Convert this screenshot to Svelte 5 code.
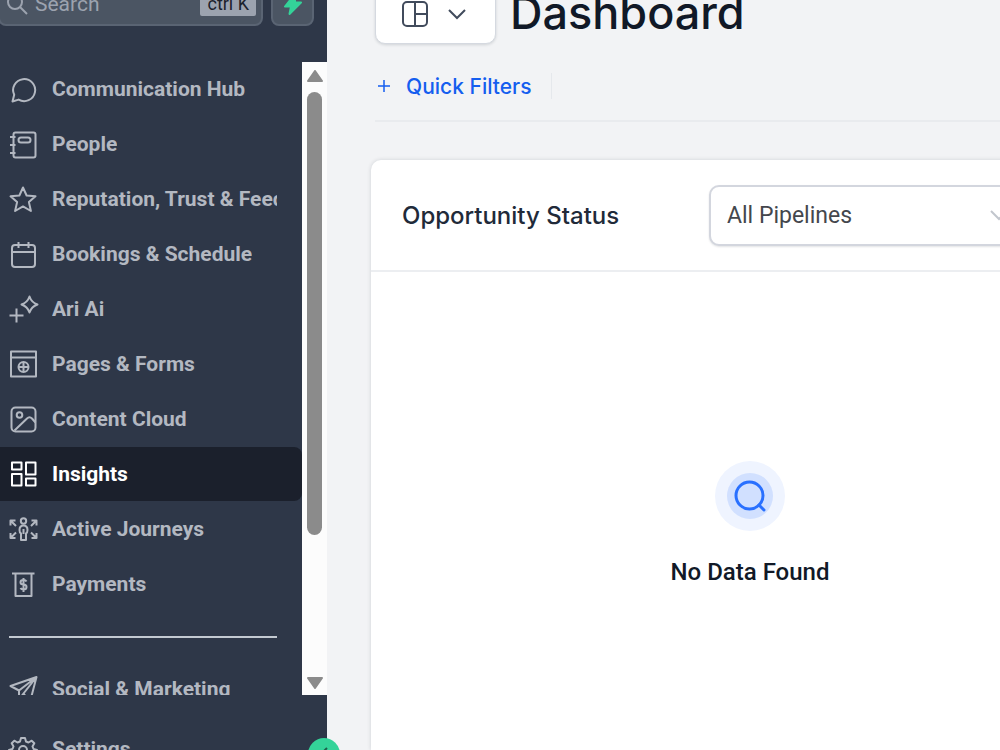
<script lang="ts">
	type Item = { name: string; icon: string };

	const items: Item[] = [
		{ name: "Communication Hub", icon: "chat" },
		{ name: "People", icon: "people" },
		{ name: "Reputation, Trust & Feedback", icon: "star" },
		{ name: "Bookings & Schedule", icon: "calendar" },
		{ name: "Ari Ai", icon: "sparkle" },
		{ name: "Pages & Forms", icon: "pages" },
		{ name: "Content Cloud", icon: "image" },
		{ name: "Insights", icon: "grid" },
		{ name: "Active Journeys", icon: "journey" },
		{ name: "Payments", icon: "payments" },
	];
	const moreItems: Item[] = [{ name: "Social & Marketing", icon: "send" }];
	const settings: Item = { name: "Settings", icon: "gear" };

	let active = $state("Insights");
	let query = $state("");
	let pipeline = $state("all");

	const thumbRatio = 0.77;

	const select = (e: MouseEvent, item: Item) => {
		e.preventDefault();
		active = item.name;
	};
</script>

{#snippet icon(name: string)}
	<svg class="icon" viewBox="0 0 28 28" aria-hidden="true">
		{#if name === "chat"}
			<path d="M3.5 26.5l1.7-6.7A11 11 0 1 1 9.6 24.6z" />
		{:else if name === "people"}
			<rect x="4.5" y="2.5" width="22" height="25" rx="2" />
			<rect x="9.5" y="7.5" width="12" height="5" rx="2.5" />
			<path d="M1 7h5.5M1 15h5.5M1 23h5.5" />
		{:else if name === "star"}
			<path d="M14 2.5l3.6 8 8.9.8-6.6 5.8 2 8.9-7.9-4.6L6.1 26l2-8.9-6.6-5.8 8.9-.8z" />
		{:else if name === "calendar"}
			<rect x="3" y="5" width="23" height="22" rx="3" />
			<path d="M3 12h23M9.5 2v6M19.5 2v6" />
		{:else if name === "sparkle"}
			<path d="M20.5 1.5c1.5 4.5 3.5 6.5 8 8-4.5 1.5-6.5 3.5-8 8-1.5-4.5-3.5-6.5-8-8 4.5-1.5 6.5-3.5 8-8z" />
			<path d="M7.5 13.5v14M.5 20.5h14" />
		{:else if name === "pages"}
			<rect x="2" y="1.5" width="25" height="25" />
			<path d="M2 7.5h25" />
			<circle cx="14.5" cy="17" r="5" />
			<path d="M9.5 17h10M14.5 12v10" />
		{:else if name === "image"}
			<rect x="2.5" y="2.5" width="24" height="24" rx="4" />
			<circle cx="10.5" cy="10" r="2.8" />
			<path d="M5.5 25.5L18 13.5q2.5-2.5 5 0l3.5 4" />
		{:else if name === "grid"}
			<rect x="3" y="2.5" width="9.5" height="7" />
			<rect x="17" y="2.5" width="9.5" height="12" />
			<rect x="3" y="14" width="9.5" height="11.5" />
			<rect x="17" y="18.5" width="9.5" height="7" />
		{:else if name === "journey"}
			<circle cx="14.5" cy="6" r="2.7" />
			<path d="M14.5 10.5c-3 0-4 2-4 4.5 0 2 .5 3 1.5 3.5V25h5v-6.5c1-.5 1.5-1.5 1.5-3.5 0-2.5-1-4.5-4-4.5zM14.5 14v5" />
			<path d="M1.5 10.500v-5h5M2 6l5 5M22.5 5.5h5v5M27 6l-5 5M1.5 18v5h5M2 22.5l5-5M22.5 23h5v-5M27 22.5l-5-5" />
		{:else if name === "payments"}
			<path d="M3 3.5h22.5M6.5 3.5V26h16V3.5" />
			<path d="M17.5 11.5c-.5-1-1.5-1.5-3-1.5-4 0-4 4.500 0 4.500s4 5 0 5c-1.5 0-2.5-.5-3-1.5M14.5 8v14" />
		{:else if name === "send"}
			<path d="M1.5 11L27.500 2 21 27l-6.5-8.5-4.5 6v-9zM10 15.5L27.500 2l-13 16.5" />
		{:else if name === "gear"}
			<circle cx="14" cy="15" r="4" />
			<path
				d="M12 3h4l1 3.5 2.5 1 3.2-1.8 2.6 2.6-1.8 3.2 1 2.5 3.5 1v4l-3.5 1-1 2.5 1.8 3.2-2.6 2.6-3.2-1.8-2.5 1-1 3.5h-4l-1-3.5-2.5-1-3.2 1.8-2.6-2.6 1.8-3.2-1-2.5L0 19v-4l3.5-1 1-2.5-1.8-3.2 2.6-2.6 3.2 1.8 2.5-1z"
			/>
		{/if}
	</svg>
{/snippet}

{#snippet link(item: Item)}
	<a
		href="#{item.icon}"
		class="item"
		data-active={active === item.name}
		onclick={(e) => select(e, item)}
	>
		{@render icon(item.icon)}
		<span>{item.name}</span>
	</a>
{/snippet}

<div class="shell">
	<aside>
		<div class="tools">
			<label class="search">
				<svg viewBox="0 0 24 24" aria-hidden="true">
					<circle cx="10" cy="10" r="7" />
					<path d="M15 15l7 7" />
				</svg>
				<input type="text" placeholder="Search" aria-label="Search" bind:value={query} />
				<kbd>ctrl K</kbd>
			</label>
			<button type="button" class="bolt" aria-label="Quick actions">
				<svg viewBox="0 0 20 24" aria-hidden="true">
					<path d="M12 2L2 14.5h6L6.5 22 18 10.5h-6z" />
				</svg>
			</button>
		</div>

		<div class="menu">
			<nav aria-label="Main">
				{#each items as item}
					{@render link(item)}
				{/each}
				<hr />
				{#each moreItems as item}
					{@render link(item)}
				{/each}
			</nav>
			<div class="scrollbar" aria-hidden="true">
				<svg viewBox="0 0 16 12"><path d="M8 1L15 11H1z" /></svg>
				<div class="track">
					<div class="thumb" style:height="{thumbRatio * 100}%"></div>
				</div>
				<svg viewBox="0 0 16 12"><path d="M1 1h14L8 11z" /></svg>
			</div>
		</div>

		<div class="footer">
			{@render link(settings)}
		</div>

		<button type="button" class="collapse" aria-label="Collapse sidebar">
			<svg viewBox="0 0 12 16" aria-hidden="true"><path d="M9 2L3 8l6 6" /></svg>
		</button>
	</aside>

	<main>
		<header>
			<button type="button" class="switcher" aria-label="Switch dashboard">
				<svg class="layout" viewBox="0 0 28 28" aria-hidden="true">
					<rect x="2" y="2" width="24" height="24" rx="4" />
					<path d="M14 2v24M14 14h12" />
				</svg>
				<svg class="chevron" viewBox="0 0 20 12" aria-hidden="true">
					<path d="M2 2l8 8 8-8" />
				</svg>
			</button>
			<h1>Dashboard</h1>
		</header>

		<div class="filters">
			<button type="button">
				<svg viewBox="0 0 12 12" aria-hidden="true"><path d="M6 0v12M0 6h12" /></svg>
				Quick Filters
			</button>
		</div>

		<section class="card">
			<div class="card-head">
				<h2>Opportunity Status</h2>
				<div class="select">
					<select aria-label="Pipeline" bind:value={pipeline}>
						<option value="all">All Pipelines</option>
					</select>
					<svg viewBox="0 0 20 12" aria-hidden="true"><path d="M2 2l8 8 8-8" /></svg>
				</div>
			</div>
			<div class="empty">
				<div class="halo">
					<svg viewBox="0 0 46 46" aria-hidden="true">
						<circle cx="22.5" cy="22.5" r="13.5" />
						<path d="M32 32l5 5" />
					</svg>
				</div>
				<p>No Data Found</p>
			</div>
		</section>
	</main>
</div>

<style>
	:global(body) {
		margin: 0;
	}

	.shell {
		display: flex;
		height: 100vh;
		overflow: hidden;
		background: #f2f3f5;
		font-family: Roboto, "Liberation Sans", sans-serif;
	}

	button,
	input,
	select {
		font: inherit;
	}

	svg {
		flex-shrink: 0;
		fill: none;
		stroke: currentColor;
		stroke-width: 2;
	}

	aside {
		position: relative;
		display: flex;
		flex-direction: column;
		flex: 0 0 327px;
		min-width: 0;
		background: #2e3748;
		color: #b3b8c1;
	}

	.tools {
		display: flex;
		align-items: flex-end;
		gap: 8px;
		flex-shrink: 0;
		height: 26px;
		padding-right: 13px;
		margin-bottom: 36px;
		overflow: hidden;
	}

	.search,
	.bolt {
		box-sizing: border-box;
		height: 44px;
		border: 2px solid #5a6473;
		border-radius: 8px;
		background: #4b5563;
	}

	.search {
		display: flex;
		align-items: center;
		flex: 1;
		min-width: 0;
		gap: 6px;
		padding: 0 5px;
		margin-left: -2px;
		color: #9ca3af;

		svg {
			width: 24px;
			height: 24px;
		}
	}

	input {
		flex: 1;
		min-width: 0;
		padding: 0;
		border: 0;
		outline: 0;
		background: none;
		color: inherit;
		font-size: 21px;

		&::placeholder {
			color: inherit;
			opacity: 1;
		}
	}

	kbd {
		padding: 0 7px;
		border-radius: 2px;
		background: #9ca3af;
		color: #1c212c;
		font: 18px/24px Roboto, "Liberation Sans", sans-serif;
	}

	.bolt {
		display: grid;
		place-items: center;
		width: 43px;
		padding: 0;

		svg {
			width: 20px;
			height: 24px;
			fill: #34d399;
			stroke: #34d399;
			stroke-linejoin: round;
		}
	}

	.menu {
		display: flex;
		flex: 1;
		min-height: 0;
	}

	nav {
		display: flex;
		flex-direction: column;
		flex: 1;
		min-width: 0;
		overflow: hidden;
	}

	.item {
		display: flex;
		align-items: center;
		flex-shrink: 0;
		gap: 15px;
		height: 54px;
		padding: 0 25px 0 9px;
		margin-bottom: 1px;
		border-radius: 0 8px 8px 0;
		color: inherit;
		font-size: 21px;
		font-weight: 700;
		line-height: 28px;
		text-decoration: none;
		white-space: nowrap;

		span {
			overflow: hidden;
		}

		&[data-active="true"] {
			background: #1b202c;
			color: #fff;
		}
	}

	.icon {
		width: 28px;
		height: 28px;
		overflow: visible;
		stroke-linejoin: round;
	}

	hr {
		flex-shrink: 0;
		width: auto;
		height: 2px;
		margin: 24px 25px 24px 9px;
		border: 0;
		background: #c3c9d1;
	}

	.scrollbar {
		display: flex;
		flex-direction: column;
		align-items: center;
		gap: 10px;
		box-sizing: border-box;
		width: 25px;
		padding: 8px 0 6px;
		background: #fcfcfc;

		svg {
			width: 16px;
			height: 12px;
			fill: #8b8b8b;
			stroke: #8b8b8b;
			stroke-linejoin: round;
		}
	}

	.track {
		flex: 1;
	}

	.thumb {
		width: 15px;
		border-radius: 8px;
		background: #8b8b8b;
	}

	.footer {
		flex-shrink: 0;
		height: 28px;
		padding-top: 27px;
	}

	.collapse {
		position: absolute;
		right: -13px;
		bottom: -20px;
		display: grid;
		place-items: center;
		width: 32px;
		height: 32px;
		padding: 0;
		border: 0;
		border-radius: 50%;
		background: #34d399;
		color: #1f5f4c;

		svg {
			width: 12px;
			height: 16px;
		}
	}

	main {
		display: flex;
		flex-direction: column;
		flex: 1;
		min-width: 0;
		padding-left: 44px;
		color: #111927;
		font-family: Inter, "Liberation Sans", sans-serif;
	}

	header {
		display: flex;
		align-items: flex-start;
		gap: 14px;
		height: 60px;
		padding-left: 4px;
		margin-top: -16px;
	}

	.switcher {
		display: flex;
		align-items: center;
		gap: 18px;
		box-sizing: border-box;
		width: 121px;
		height: 60px;
		padding: 0 25px;
		border: 1px solid #d5d9e0;
		border-radius: 10px;
		background: #fff;
		box-shadow: 0 1px 3px #10182826;
		color: #414b5c;
	}

	.layout {
		width: 28px;
		height: 28px;
	}

	.chevron {
		width: 20px;
		height: 12px;
	}

	h1,
	h2,
	p {
		margin: 0;
		font-weight: 500;
	}

	h1 {
		font-size: 45px;
		line-height: 58px;
	}

	.filters {
		padding: 29px 0 21px;
		margin: 0 0 38px 4px;
		border-bottom: 2px solid #e9ebee;

		button {
			display: flex;
			align-items: center;
			gap: 16px;
			height: 26px;
			padding: 0 19px 0 3px;
			border: 0;
			border-right: 1px solid #e5e8ec;
			background: none;
			color: #155eef;
			font-size: 21px;
			font-weight: 500;
		}

		svg {
			width: 12px;
			height: 12px;
			stroke-width: 1.5;
		}
	}

	/* the widget column runs on past the right edge of the window */
	.card {
		flex: 1;
		margin-right: -129px;
		border-radius: 10px 10px 0 0;
		background: #fff;
		box-shadow: 0 0 4px #10182826;
	}

	.card-head {
		display: grid;
		grid-template-columns: 276px 1fr;
		align-items: center;
		gap: 31px;
		padding: 25px 100px 24px 31px;
		border-bottom: 2px solid #eceef1;
	}

	h2 {
		color: #212a39;
		font-size: 24px;
		line-height: 32px;
	}

	.select {
		position: relative;

		svg {
			position: absolute;
			top: 24px;
			right: 20px;
			width: 20px;
			height: 12px;
			color: #c2c6cd;
			pointer-events: none;
		}
	}

	select {
		display: block;
		appearance: none;
		box-sizing: border-box;
		width: 100%;
		height: 61px;
		padding: 0 16px;
		border: 2px solid #d3d6de;
		border-radius: 10px;
		background: #fff;
		box-shadow: 0 1px 2px #1018281f;
		color: #44474d;
		font-family: Roboto, "Liberation Sans", sans-serif;
		font-size: 23px;
	}

	.empty {
		display: flex;
		flex-direction: column;
		align-items: center;
		gap: 25px;
		padding-top: 189px;
		font-family: Roboto, "Liberation Sans", sans-serif;
		font-size: 24px;
		line-height: 32px;
	}

	.halo {
		padding: 12px;
		border-radius: 50%;
		background: #eff4ff;

		svg {
			display: block;
			width: 46px;
			height: 46px;
			border-radius: 50%;
			background: #d1e0ff;
			color: #2970ff;
			stroke-width: 3;
			stroke-linecap: round;
		}
	}
</style>
